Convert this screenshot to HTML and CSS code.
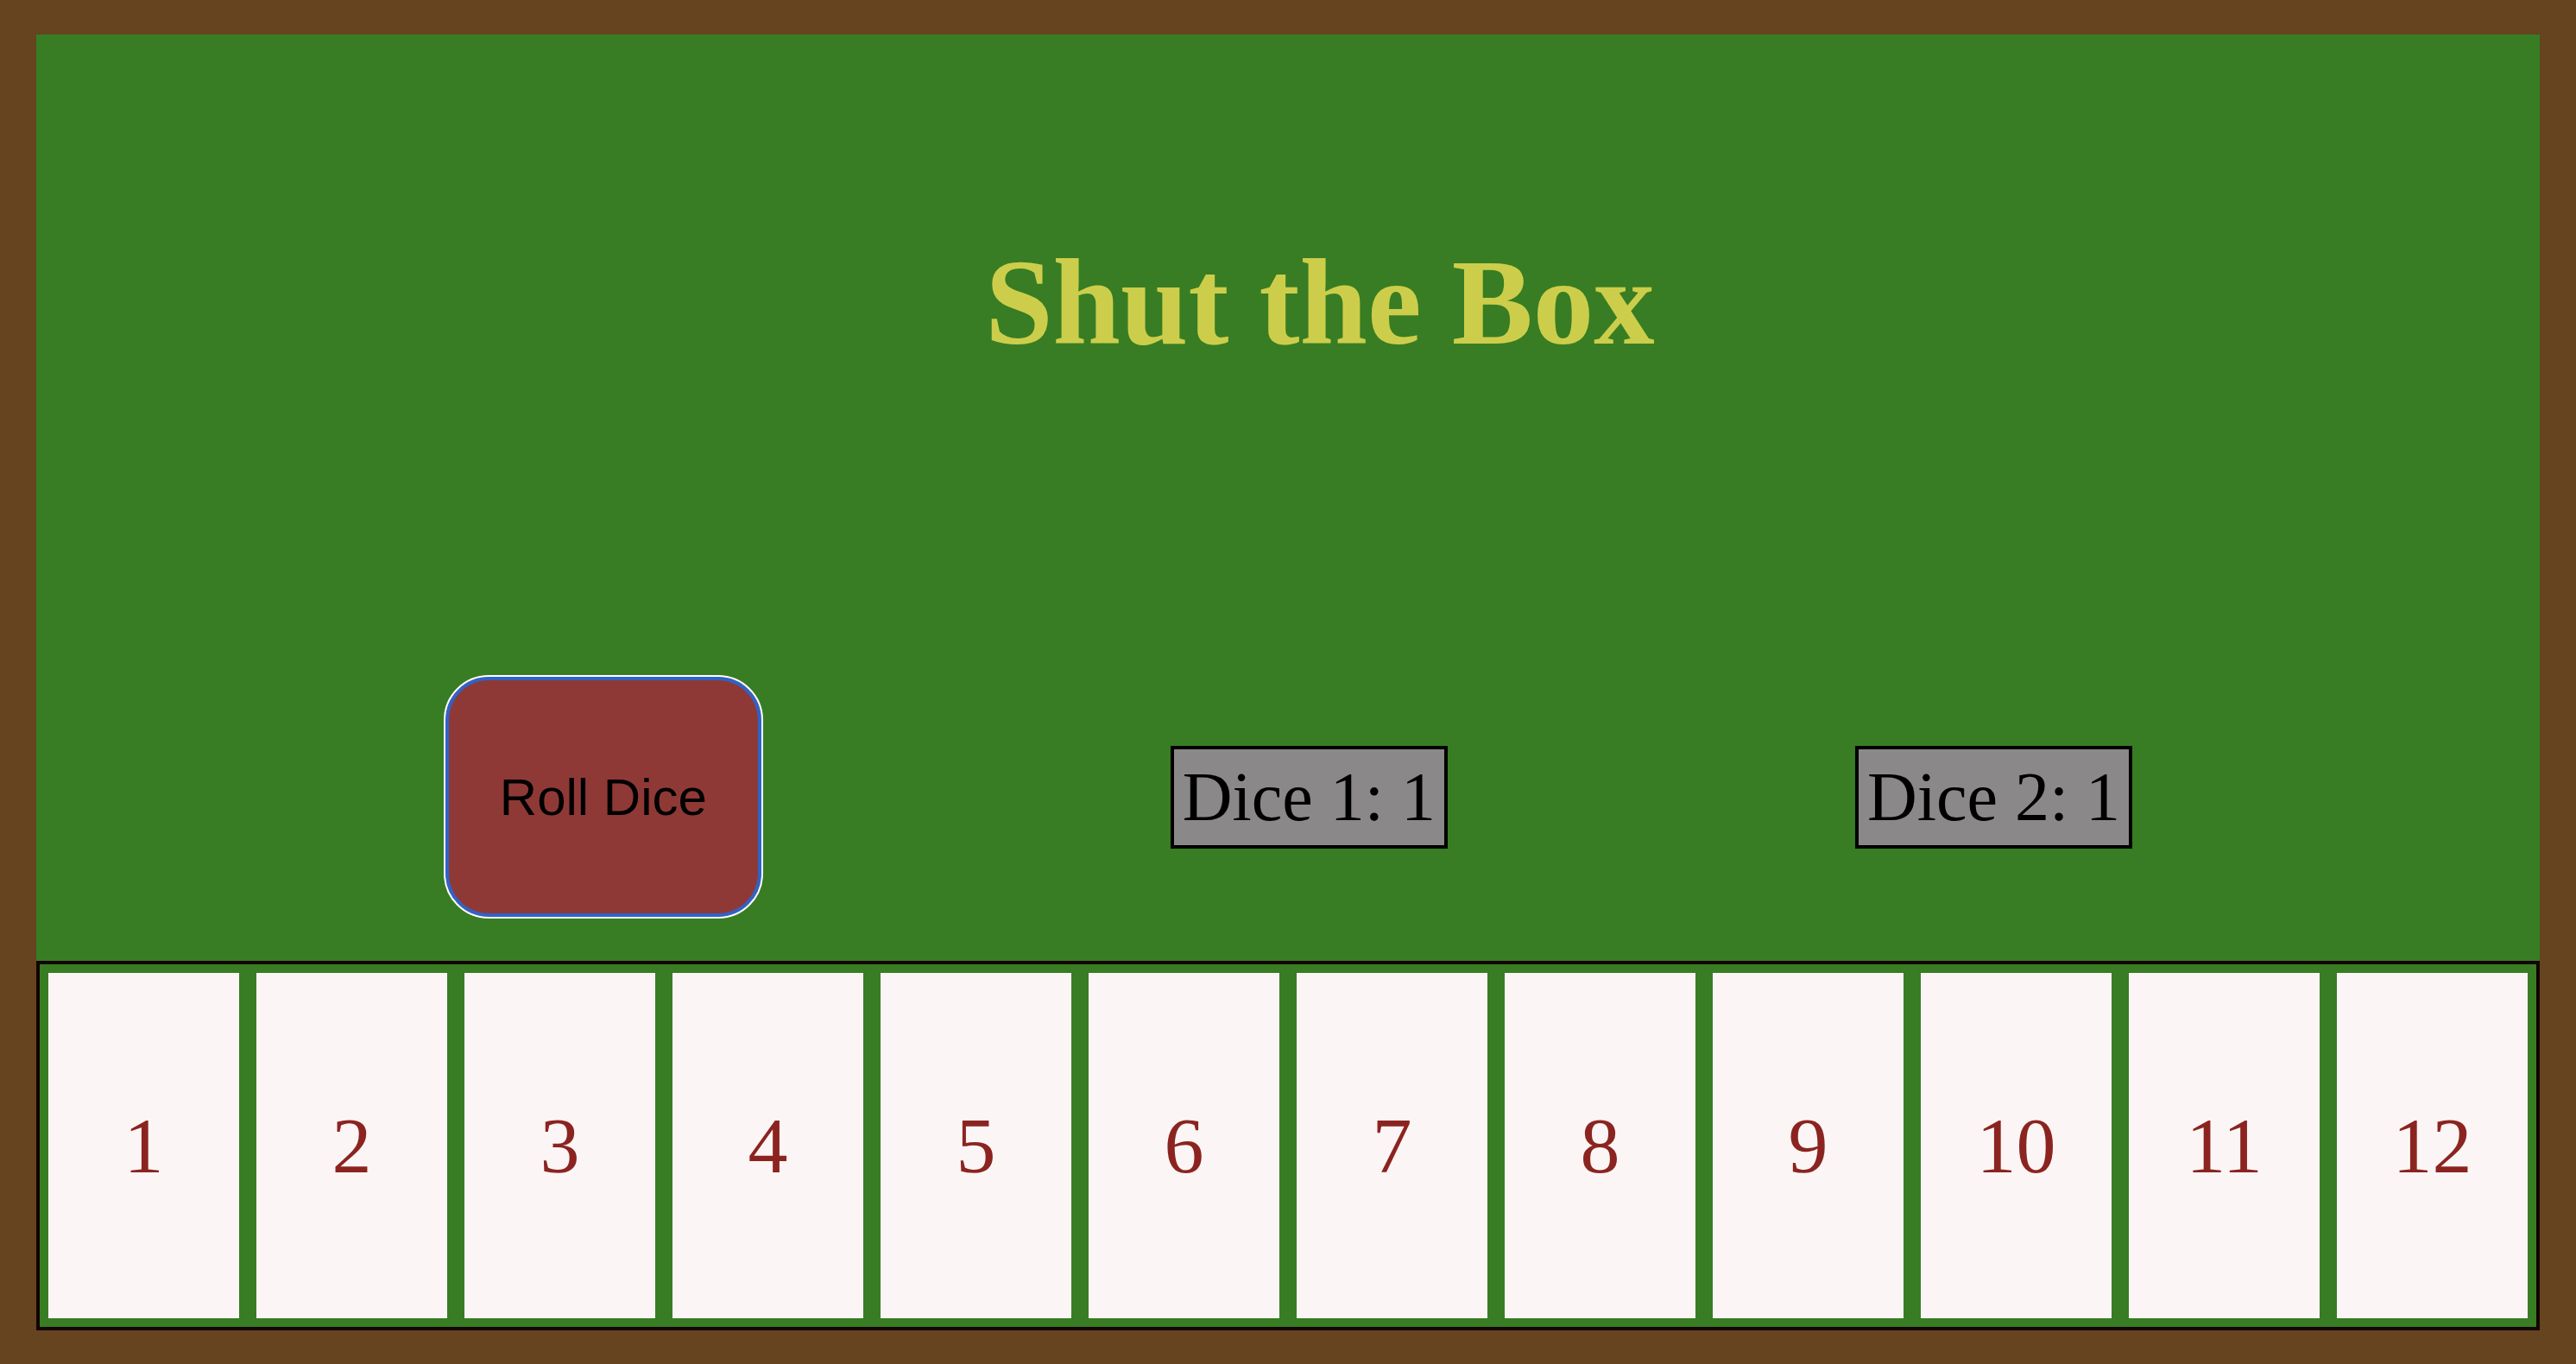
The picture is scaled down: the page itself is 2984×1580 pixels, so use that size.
FILE: index.html
```html
<!DOCTYPE html>
<html lang="en">
<head>
<meta charset="utf-8">
<title>Shut the Box</title>
<link rel="stylesheet" href="styles.css">
</head>
<body>
<main class="table">
  <h1 class="title">Shut the Box</h1>
  <div class="controls">
    <button class="roll">Roll Dice</button>
    <div class="die">Dice 1: 1</div>
    <div class="die">Dice 2: 1</div>
  </div>
  <div class="tiles">
    <div class="tile">1</div>
    <div class="tile">2</div>
    <div class="tile">3</div>
    <div class="tile">4</div>
    <div class="tile">5</div>
    <div class="tile">6</div>
    <div class="tile">7</div>
    <div class="tile">8</div>
    <div class="tile">9</div>
    <div class="tile">10</div>
    <div class="tile">11</div>
    <div class="tile">12</div>
  </div>
</main>
</body>
</html>
```
FILE: styles.css
```css
html, body {
  margin: 0;
  height: 100%;
}
body {
  background: #65441f;
  padding: 40px 42px 39px;
  box-sizing: border-box;
  font-family: "Liberation Serif", "Times New Roman", serif;
  overflow: hidden;
}
.table {
  background: #387d23;
  display: flex;
  flex-direction: column;
  height: 100%;
}
.title {
  margin: 230px 0 0 74px;
  font-size: 141px;
  line-height: 160px;
  height: 160px;
  font-weight: bold;
  text-align: center;
  color: #ccce4b;
}
.controls {
  margin-top: 352px;
  height: 282px;
  display: flex;
  justify-content: space-evenly;
  align-items: center;
}
.roll {
  width: 370px;
  height: 282px;
  box-sizing: border-box;
  border: 2px solid #ffffff;
  box-shadow: inset 0 0 0 4px #2f63c9;
  border-radius: 52px;
  background: #8f3936;
  color: #000;
  font-family: "Liberation Sans", Arial, sans-serif;
  font-size: 60px;
  padding: 0;
}
.die {
  background: #8a8888;
  border: 4px solid #000;
  padding: 10px;
  font-size: 80px;
  line-height: 91px;
  color: #000;
}
.tiles {
  margin-top: 49px;
  border: 4px solid #140404;
  padding: 10px;
  display: flex;
  gap: 20px;
  height: 400px;
}
.tile {
  flex: 1;
  background: #fbf5f5;
  color: #8b2420;
  font-size: 92px;
  display: flex;
  align-items: center;
  justify-content: center;
}
```
